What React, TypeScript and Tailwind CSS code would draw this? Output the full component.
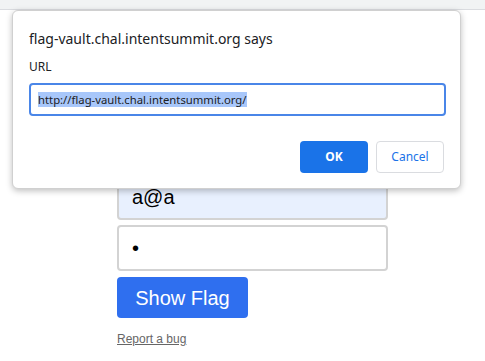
import React from "react";

const dialogFont = { fontFamily: '"Noto Sans", "Open Sans", sans-serif' };

function PromptDialog() {
  return (
    <div
      className="absolute left-[12px] top-[10px] w-[449px] h-[179px] rounded-[6px] border border-[#d0d0d0] bg-white shadow-[0_2px_6px_rgba(0,0,0,0.25)]"
      style={dialogFont}
    >
      <div className="pl-[16px] pr-[16px]">
        <div className="pt-[18px] text-[14px] leading-[20px] text-[#202124]">flag-vault.chal.intentsummit.org says</div>
        <div className="mt-[10px] text-[12px] leading-[16px] text-[#202124]">URL</div>
        <div className="mt-[8px] h-[33px] w-[417px] rounded-[4px] border-2 border-[#4a86e8] flex items-center pl-[7px]">
          <span className="bg-[#a8c7fa] text-[11.3px] leading-[15px] text-[#202124]">http://flag-vault.chal.intentsummit.org/</span>
        </div>
        <div className="mt-[25px] flex justify-end gap-[8px]">
          <button className="h-[32px] w-[68px] rounded-[4px] bg-[#1a73e8] text-white text-[12px] font-bold">OK</button>
          <button className="h-[32px] w-[68px] rounded-[4px] border border-[#dadce0] bg-white text-[#1a73e8] text-[12px]">Cancel</button>
        </div>
      </div>
    </div>
  );
}

export default function App() {
  return (
    <div className="relative w-[485px] h-[361px] bg-white overflow-hidden" style={{ fontFamily: '"Liberation Sans", Arial, sans-serif' }}>
      <div className="h-[10px] bg-[#f1f3f4] border-b border-[#dadce0]" />
      <div className="ml-[117px] w-[271px] pt-[164px] flex flex-col gap-[5px]">
        <input
          readOnly
          value="a@a"
          className="h-[46px] w-full rounded-[4px] border-2 border-[#d3d3d3] bg-[#e8f0fe] px-[13px] text-[20px] text-black outline-none"
        />
        <input
          readOnly
          type="password"
          value="a"
          className="h-[46px] w-full rounded-[4px] border-2 border-[#d3d3d3] bg-white px-[13px] text-[20px] text-black outline-none"
        />
        <button className="mt-[1px] h-[41px] w-[131px] rounded-[4px] bg-[#2f6fef] text-white text-[20px]">Show Flag</button>
        <a className="mt-[9px] text-[12px] leading-[14px] text-[#666] underline">Report a bug</a>
      </div>
      <PromptDialog />
    </div>
  );
}
